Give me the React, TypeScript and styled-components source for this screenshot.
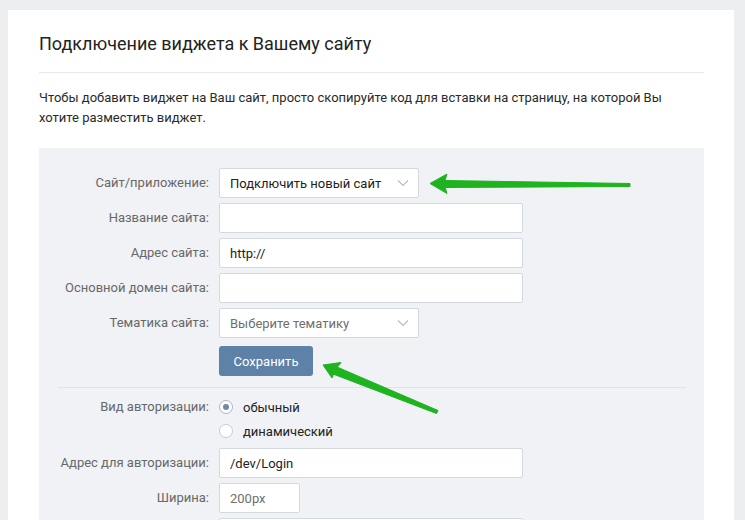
import React from "react";
import styled, { createGlobalStyle } from "styled-components";

const Global = createGlobalStyle`
  html, body { margin: 0; padding: 0; background: #edeef0; }
  body { font-family: Roboto, "Open Sans", Arial, sans-serif; -webkit-font-smoothing: antialiased; }
  * { box-sizing: border-box; }
`;

const Card = styled.div`
  position: relative;
  margin: 10px 11px 0 8px;
  background: #fff;
  padding: 22px 30px 0 31px;
  height: 510px;
  overflow: hidden;
`;

const Title = styled.h1`
  margin: 0;
  font-weight: 400;
  font-size: 18px;
  line-height: 24px;
  color: #222;
  padding-bottom: 16px;
  border-bottom: 1px solid #e7e8ec;
`;

const Intro = styled.p`
  margin: 15px 0 20px;
  font-size: 13px;
  line-height: 20px;
  color: #2a2a2a;
`;

const Form = styled.div`
  background: #f0f2f5;
  padding: 20px 0 0;
`;

const Grid = styled.div`
  display: grid;
  grid-template-columns: 170px 1fr;
  column-gap: 10px;
  row-gap: 5px;
  align-items: center;
`;

const Label = styled.div`
  text-align: right;
  font-size: 13px;
  color: #686868;
  line-height: 30px;
`;

const Field = styled.div<{ $w: number }>`
  width: ${(p) => p.$w}px;
  height: 30px;
  background: #fff;
  border: 1px solid #d3d9de;
  border-radius: 2px;
  display: flex;
  align-items: center;
  justify-content: space-between;
  padding: 0 9px 0 10px;
  font-size: 13px;
`;

const Value = styled.span<{ $muted?: boolean }>`
  color: ${(p) => (p.$muted ? "#6f6f6f" : "#222")};
`;

const Button = styled.button`
  margin-top: 3px;
  width: 94px;
  height: 30px;
  border: 0;
  border-radius: 3px;
  background: #5e81a8;
  color: #fff;
  font-family: inherit;
  font-size: 13px;
  padding: 0;
`;

const Sep = styled.div`
  margin: 11px 18px 7px 19px;
  border-top: 1px solid #dfe2e8;
`;

const RadioRow = styled.label`
  display: flex;
  align-items: center;
  gap: 10px;
  height: 24px;
  font-size: 13px;
  color: #222;
`;

const RadioCircle = styled.span<{ $on?: boolean }>`
  width: 14px;
  height: 14px;
  border-radius: 50%;
  border: 1px solid ${(p) => (p.$on ? "#a7b5c6" : "#c5ccd5")};
  background: #fff;
  display: flex;
  align-items: center;
  justify-content: center;
  &::after {
    content: "";
    width: 6px;
    height: 6px;
    border-radius: 50%;
    background: ${(p) => (p.$on ? "#7089a8" : "transparent")};
  }
`;

const Stack = styled.div`
  display: flex;
  flex-direction: column;
`;

const LabelTop = styled(Label)`
  align-self: start;
  line-height: 24px;
`;

const Overlay = styled.svg`
  position: absolute;
  left: -8px;
  top: -10px;
  pointer-events: none;
`;

const Chevron = () => (
  <svg width="12" height="8" viewBox="0 0 12 8">
    <path d="M1 1.5 L6 6.5 L11 1.5" fill="none" stroke="#b5bdc8" strokeWidth="1.2" />
  </svg>
);

export default function App() {
  return (
    <>
      <Global />
      <Card>
        <Title>Подключение виджета к Вашему сайту</Title>
        <Intro>
          Чтобы добавить виджет на Ваш сайт, просто скопируйте код для вставки на страницу, на которой Вы
          хотите разместить виджет.
        </Intro>
        <Form>
          <Grid>
            <Label>Сайт/приложение:</Label>
            <Field $w={200}>
              <Value>Подключить новый сайт</Value>
              <Chevron />
            </Field>
            <Label>Название сайта:</Label>
            <Field $w={304} />
            <Label>Адрес сайта:</Label>
            <Field $w={304}>
              <Value>http://</Value>
            </Field>
            <Label>Основной домен сайта:</Label>
            <Field $w={304} />
            <Label>Тематика сайта:</Label>
            <Field $w={200}>
              <Value $muted>Выберите тематику</Value>
              <Chevron />
            </Field>
            <span />
            <div>
              <Button>Сохранить</Button>
            </div>
          </Grid>
          <Sep />
          <Grid>
            <LabelTop>Вид авторизации:</LabelTop>
            <Stack>
              <RadioRow>
                <RadioCircle $on />
                обычный
              </RadioRow>
              <RadioRow>
                <RadioCircle />
                динамический
              </RadioRow>
            </Stack>
            <Label>Адрес для авторизации:</Label>
            <Field $w={304}>
              <Value>/dev/Login</Value>
            </Field>
            <Label>Ширина:</Label>
            <Field $w={81}>
              <Value $muted>200px</Value>
            </Field>
            <span />
            <Field $w={304} />
          </Grid>
        </Form>
        <Overlay width="745" height="520" viewBox="0 0 745 520">
          <g fill="#1fb31f" stroke="#1fb31f" strokeLinejoin="round" strokeWidth="1">
            <path d="M444 180.5 L630 183.5 L630 186.5 L444 187.5 Z" />
            <path d="M430 183.5 L447 174 L444 183.5 L447 193.5 Z" />
            <path d="M337 367 L438 410.5 L436.5 413.5 L333 374 Z" />
            <path d="M323 365 L341 362.5 L335 370 L332 378 Z" />
          </g>
        </Overlay>
      </Card>
    </>
  );
}
